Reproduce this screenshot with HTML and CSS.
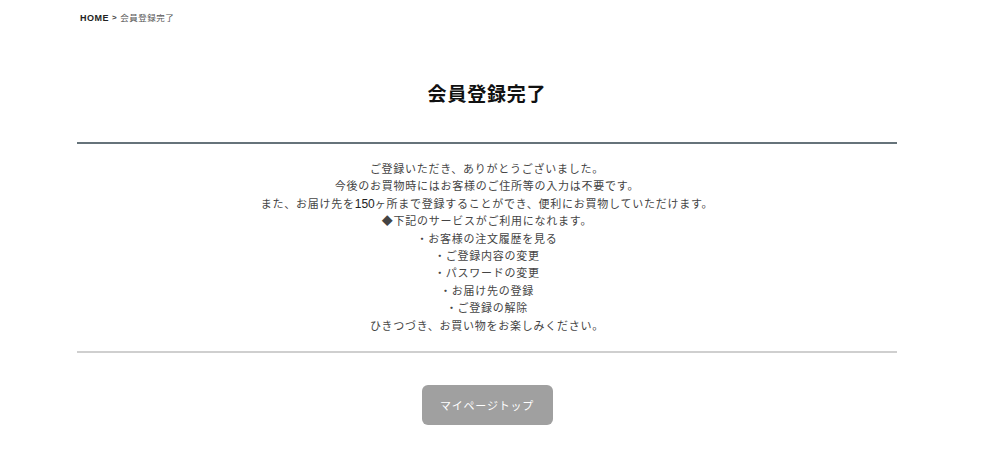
FILE: index.html
```html
<!DOCTYPE html>
<html lang="ja">
<head>
<meta charset="utf-8">
<title>会員登録完了</title>
<link rel="stylesheet" href="styles.css">
</head>
<body>
<div class="page">
  <nav class="breadcrumb"><span class="home">HOME</span><span class="sep">&gt;</span><span class="current">会員登録完了</span></nav>
  <h1 class="title">会員登録完了</h1>
  <section class="message">
    <p>ご登録いただき、ありがとうございました。</p>
    <p>今後のお買物時にはお客様のご住所等の入力は不要です。</p>
    <p>また、お届け先を<span class="num">150</span>ヶ所まで登録することができ、便利にお買物していただけます。</p>
    <p>◆下記のサービスがご利用になれます。</p>
    <p>・お客様の注文履歴を見る</p>
    <p>・ご登録内容の変更</p>
    <p>・パスワードの変更</p>
    <p>・お届け先の登録</p>
    <p>・ご登録の解除</p>
    <p>ひきつづき、お買い物をお楽しみください。</p>
  </section>
  <div class="actions"><a class="btn" href="#">マイページトップ</a></div>
</div>
</body>
</html>
```
FILE: styles.css
```css
html, body {
  margin: 0;
  padding: 0;
  background: #fff;
}
body {
  font-family: "Liberation Sans", "Noto Sans CJK JP", sans-serif;
  color: #333;
}
.page {
  width: 820px;
  margin-left: 77px;
}
.breadcrumb {
  padding-top: 13px;
  margin-left: 3px;
  font-size: 9px;
  line-height: 10px;
  letter-spacing: 0.5px;
  display: flex;
  align-items: center;
}
.breadcrumb .home {
  font-weight: bold;
  color: #222;
}
.breadcrumb .sep {
  margin: 0 3px 0 3px;
  color: #444;
  font-weight: bold;
  font-size: 8px;
}
.breadcrumb .current {
  color: #555;
  font-size: 8.5px;
}
.title {
  margin: 60px 0 0;
  text-align: center;
  font-family: "Liberation Serif", "Noto Sans CJK JP", serif;
  font-weight: bold;
  font-size: 19px;
  line-height: 24px;
  letter-spacing: 0.8px;
  color: #111;
  padding-bottom: 35px;
  border-bottom: 2px solid #66737a;
}
.message {
  padding: 17px 0 16px;
  border-bottom: 2px solid #cfcfcf;
  text-align: center;
  font-size: 11px;
  line-height: 17.4px;
  letter-spacing: 0.75px;
  color: #444;
}
.message p {
  margin: 0;
}
.message .num {
  font-size: 12px;
  letter-spacing: 0;
  color: #222;
}
.actions {
  display: flex;
  justify-content: center;
  padding-top: 32px;
}
.btn {
  display: flex;
  align-items: center;
  justify-content: center;
  width: 131px;
  height: 40px;
  border-radius: 6px;
  background: #a0a0a0;
  color: #fff;
  font-size: 11px;
  letter-spacing: 0.8px;
  text-decoration: none;
}
```
